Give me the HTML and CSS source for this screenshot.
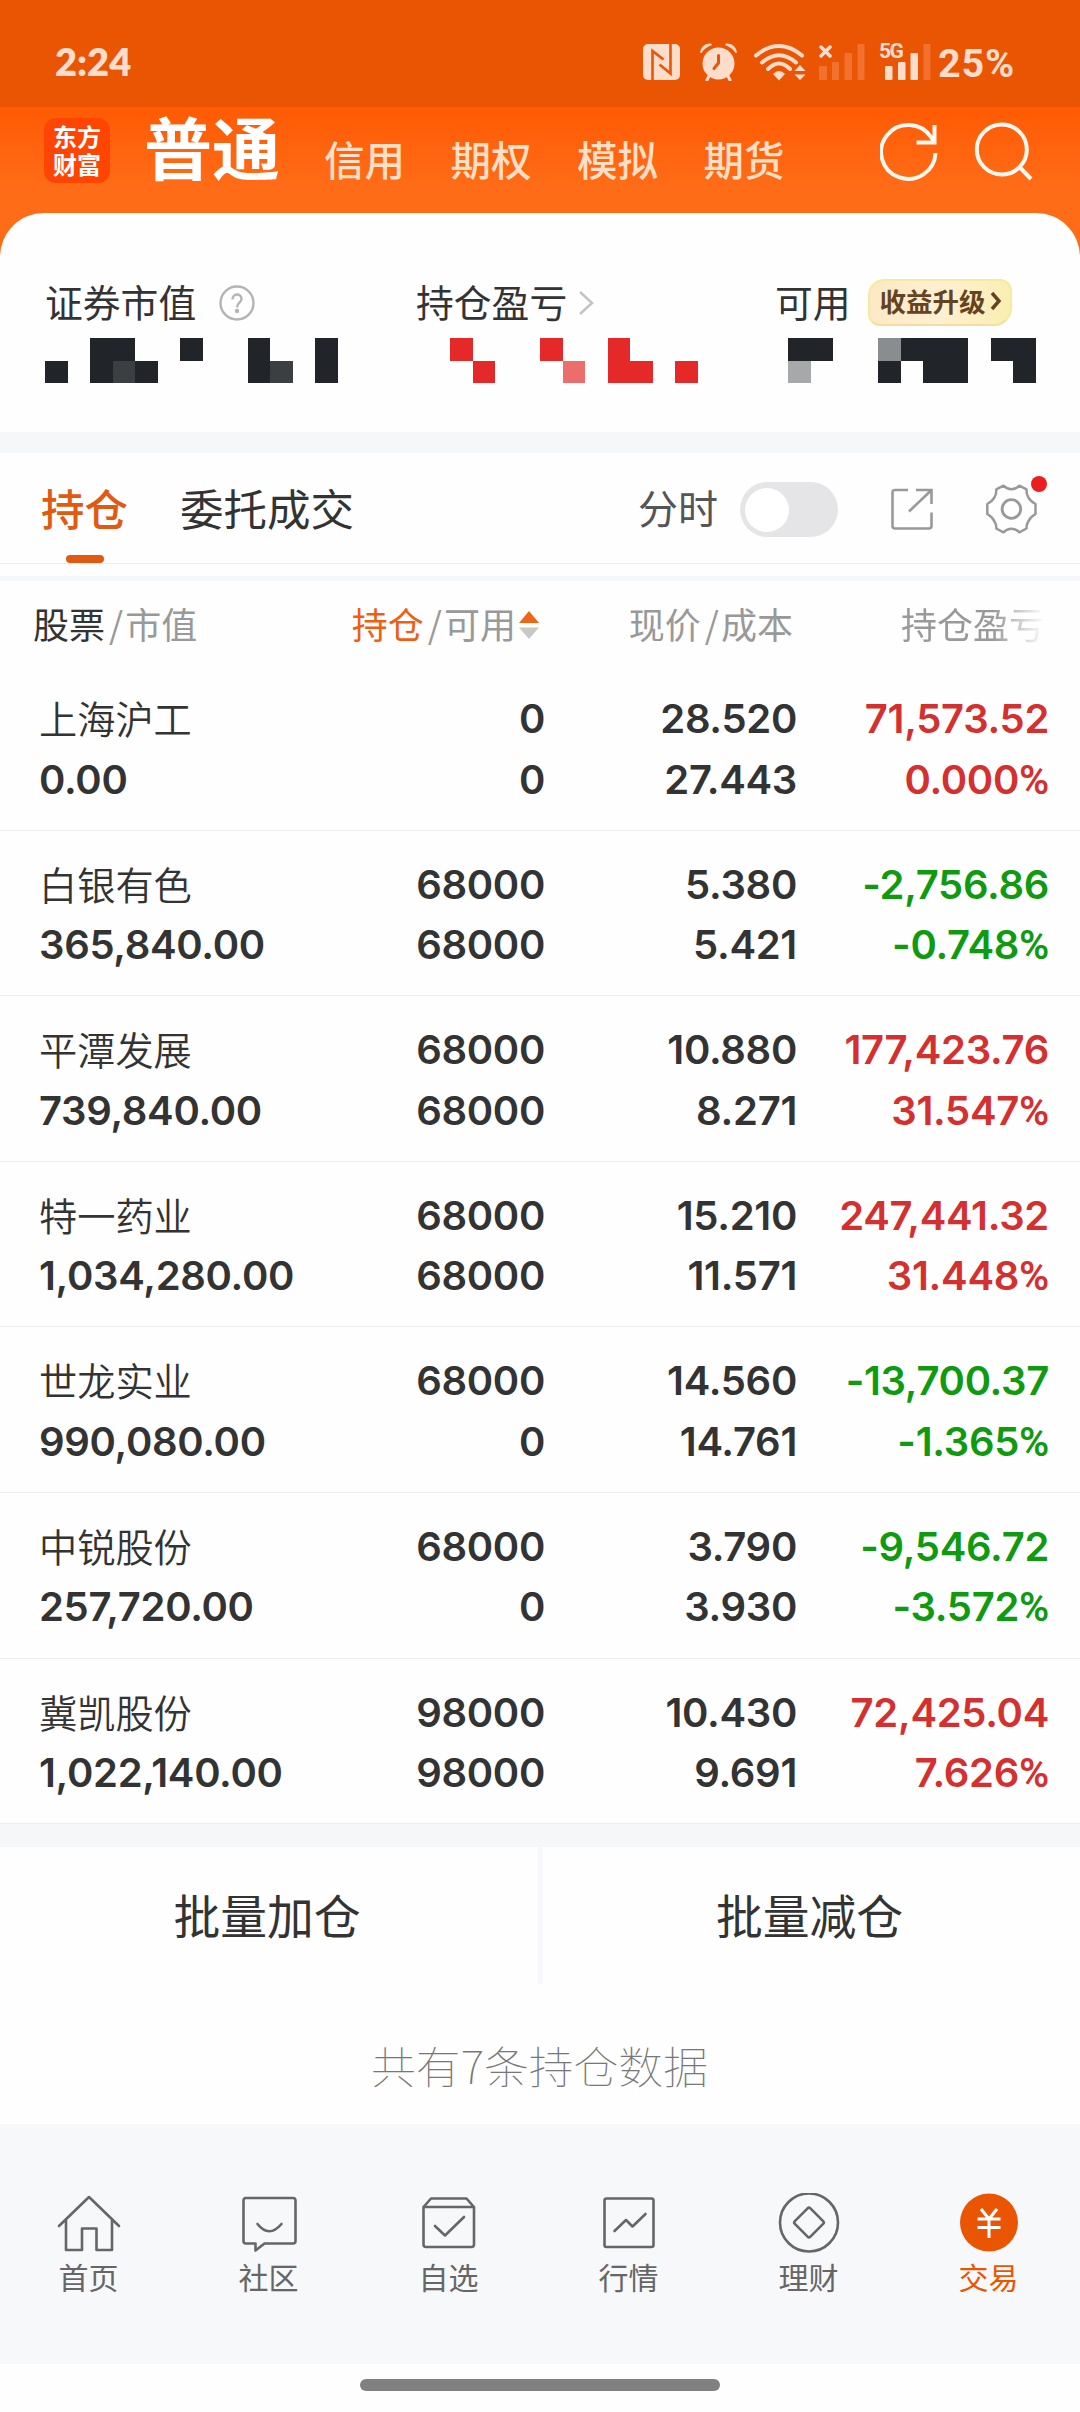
FILE: index.html
```html
<!DOCTYPE html>
<html lang="zh-CN">
<head>
  <meta charset="UTF-8" />
  <meta name="viewport" content="width=device-width, initial-scale=1" />
  <title>东方财富 - 持仓</title>
  <link rel="stylesheet" href="styles.css">
</head>
<body>

<div class="status-bar">
  <span class="clock">2:24</span>
  <div class="status-icons">
    <svg class="icon-nfc" width="37" height="36" viewBox="0 0 37 36">
      <rect width="37" height="36" rx="5" fill="#fcdccb"/>
      <path d="M9.500 36V7L20.500 15.500M27.500 0V29.500L16.500 20.500" fill="none" stroke="#ea5504" stroke-width="2.600"/>
    </svg>
    <svg class="icon-alarm" width="37" height="38" viewBox="0 0 37 38">
      <circle cx="18.500" cy="20.500" r="16" fill="#fcdccb"/>
      <path d="M0 9.500C1 3 6 0 11 .5L12 2C7 4 4 6 1.500 10ZM37 9.500C36 3 31 0 26 .5L25 2C30 4 33 6 35.500 10Z" fill="#fcdccb"/>
      <path d="M9 33L7 37M28 33L30 37" stroke="#fcdccb" stroke-width="3" stroke-linecap="round"/>
      <path d="M18.500 12.500V20L14 25.500" fill="none" stroke="#ea5504" stroke-width="3" stroke-linecap="round"/>
    </svg>
    <svg class="icon-wifi" width="52" height="37" viewBox="0 0 52 37">
      <path d="M2 11.500Q25 -7.500 48 11.500M8 18.500Q25 4 42 18.500M14 25Q25 14 36 25" fill="none" stroke="#fcdccb" stroke-width="4" stroke-linecap="round"/>
      <path d="M19 30Q25 24 31 30L25 36.500Z" fill="#fcdccb"/>
      <path d="M40.500 27L46 21L51.500 27ZM40.500 30.500L46 36L51.500 30.500Z" fill="#fcdccb"/>
    </svg>
    <svg class="icon-nosim" width="46" height="36" viewBox="0 0 46 36">
      <path d="M2 3L11 12M11 3L2 12" stroke="#fcdccb" stroke-width="3.500" stroke-linecap="round"/>
      <g fill="#f2712f">
        <rect x="0" y="22" width="8" height="14" rx="1"/>
        <rect x="13" y="18" width="7" height="18" rx="1"/>
        <rect x="25.500" y="9" width="7.500" height="27" rx="1"/>
        <rect x="38.500" y="0" width="7" height="36" rx="1"/>
      </g>
    </svg>
    <div class="signal">
      <span class="signal-type">5G</span>
      <svg width="46" height="36" viewBox="0 0 46 36">
        <rect x="0" y="22" width="7.500" height="14" rx="1" fill="#fcdccb"/>
        <rect x="13" y="18" width="7.500" height="18" rx="1" fill="#fcdccb"/>
        <rect x="25.500" y="9" width="7.500" height="27" rx="1" fill="#fcdccb"/>
        <rect x="38.500" y="0" width="7" height="36" rx="1" fill="#f2712f"/>
      </svg>
    </div>
    <span class="battery">25%</span>
  </div>
</div>

<header class="header">
  <div class="logo">东方财富</div>
  <nav class="account-tabs">
    <span class="account-tab active">普通</span>
    <span class="account-tab">信用</span>
    <span class="account-tab">期权</span>
    <span class="account-tab">模拟</span>
    <span class="account-tab">期货</span>
  </nav>
  <div class="header-actions">
    <svg width="60" height="60" viewBox="0 0 60 60" fill="none" stroke="#fff8f0" stroke-width="4">
      <path d="M55.500 31A27.200 27 0 1 1 51 15L54 19"/>
      <path d="M54.500 3V20.500H36.500"/>
    </svg>
    <svg width="60" height="60" viewBox="0 0 60 60" fill="none" stroke="#fff8f0" stroke-width="4">
      <circle cx="27.800" cy="27.500" r="25"/>
      <path d="M45 44.500L57 57"/>
    </svg>
  </div>
</header>

<main>
  <section class="summary">
    <div class="summary-item">
      <div class="summary-label">证券市值
        <svg class="help" width="36" height="36" viewBox="0 0 36 36" fill="none" stroke="#b4b4b4" stroke-width="2.400">
          <circle cx="18" cy="18" r="16.500"/>
          <path d="M13.500 14.500C13.500 8 22.500 8 22.500 14C22.500 18 18 17.500 18 22.500"/>
          <circle cx="18" cy="26" r="1" fill="#b4b4b4"/>
        </svg>
      </div>
      <svg class="masked" width="293" height="45" viewBox="0 0 13 2" preserveAspectRatio="none" shape-rendering="crispEdges" fill="#212429">
        <path d="M0 1h1v1h-1zM2 0h2v1h1v1h-3zM6 0h1v1h-1zM9 0h1v1h1v1h-2zM12 0h1v2h-1z"/>
        <path d="M3 1h1v1h-1zM10 1h1v1h-1z" fill="#3b3f41"/>
      </svg>
    </div>
    <div class="summary-item">
      <div class="summary-label">持仓盈亏
        <svg class="more" width="16" height="26" viewBox="0 0 16 26" fill="none" stroke="#c4c4c4" stroke-width="2.500">
          <path d="M2 2L14 13L2 24"/>
        </svg>
      </div>
      <svg class="masked masked-profit" width="248" height="45" viewBox="0 0 11 2" preserveAspectRatio="none" shape-rendering="crispEdges" fill="#e52828">
        <path d="M0 0h1v1h-1zM1 1h1v1h-1zM4 0h1v1h-1zM7 0h1v1h1v1h-2zM10 1h1v1h-1z"/>
        <path d="M5 1h1v1h-1z" fill="#ed6d6d"/>
      </svg>
    </div>
    <div class="summary-item">
      <div class="summary-label">可用
        <span class="badge">收益升级
          <svg width="12" height="20" viewBox="0 0 12 20" fill="none" stroke="#654322" stroke-width="3.500">
            <path d="M2 2L9 10L2 18"/>
          </svg>
        </span>
      </div>
      <svg class="masked masked-cash" width="248" height="45" viewBox="0 0 11 2" preserveAspectRatio="none" shape-rendering="crispEdges" fill="#212429">
        <path d="M0 0h2v1h-2zM4 1h1v1h-1zM5 0h3v2h-2v-1h-1zM9 0h2v2h-1v-1h-1z"/>
        <path d="M0 1h1v1h-1z" fill="#a7a8aa"/>
        <path d="M4 0h1v1h-1z" fill="#8a8d90"/>
      </svg>
    </div>
  </section>

  <section class="toolbar">
    <div class="view-tab active">持仓</div>
    <div class="view-tab">委托成交</div>
    <div class="toolbar-actions">
      <span class="toggle-label">分时</span>
      <span class="toggle"></span>
      <svg class="icon-share" width="42" height="42" viewBox="0 0 42 42" fill="none" stroke="#999" stroke-width="2.600">
        <path d="M17 2H4Q1.500 2 1.500 4V38Q1.500 40.500 4 40.500H38Q40.500 40.500 40.500 38V24.500"/>
        <path d="M25 2H40.500V16M40 2.500L18 23.500"/>
      </svg>
      <span class="settings">
        <svg width="53" height="52" viewBox="0 0 53 52" fill="none" stroke="#999" stroke-width="2.500" stroke-linejoin="round">
          <path d="M18.500 2.700L11.300 6.300Q11.500 11 9.500 14.300Q7.500 18 2.300 21V31Q7.500 34 9.500 38.500Q11.500 41.500 11.300 45.500L18.500 49.300Q22 45.700 26.400 45.700Q31 45.700 34.300 49.300L41.500 45.500Q41.300 41.500 43.300 38.500Q45.300 34 50.500 31V21Q45.300 18 43.300 14.300Q41.300 11 41.500 6.300L34.300 2.700Q31 6.300 26.400 6.300Q22 6.300 18.500 2.700Z"/>
          <circle cx="26.400" cy="26" r="9.300" stroke-width="2.800"/>
        </svg>
        <i class="dot"></i>
      </span>
    </div>
  </section>

  <section class="holdings">
    <div class="holdings-head">
      <div><span class="dark">股票</span><b>/</b>市值</div>
      <div><span class="orange">持仓</span><b>/</b>可用<svg class="sort" width="22" height="30" viewBox="0 0 22 30">
        <path d="M1 13L11 1L21 13Z" fill="#f06418"/><path d="M1 17.500L11 29L21 17.500Z" fill="#c8c8c8"/>
      </svg></div>
      <div>现价<b>/</b>成本</div>
      <div class="fade">持仓盈亏</div>
    </div>

    <div class="row">
      <div><span class="name">上海沪工</span><span>0.00</span></div>
      <div><span>0</span><span>0</span></div>
      <div><span>28.520</span><span>27.443</span></div>
      <div class="up"><span>71,573.52</span><span>0.000<i>%</i></span></div>
    </div>
    <div class="row">
      <div><span class="name">白银有色</span><span>365,840.00</span></div>
      <div><span>68000</span><span>68000</span></div>
      <div><span>5.380</span><span>5.421</span></div>
      <div class="down"><span>-2,756.86</span><span>-0.748<i>%</i></span></div>
    </div>
    <div class="row">
      <div><span class="name">平潭发展</span><span>739,840.00</span></div>
      <div><span>68000</span><span>68000</span></div>
      <div><span>10.880</span><span>8.271</span></div>
      <div class="up"><span>177,423.76</span><span>31.547<i>%</i></span></div>
    </div>
    <div class="row">
      <div><span class="name">特一药业</span><span>1,034,280.00</span></div>
      <div><span>68000</span><span>68000</span></div>
      <div><span>15.210</span><span>11.571</span></div>
      <div class="up"><span>247,441.32</span><span>31.448<i>%</i></span></div>
    </div>
    <div class="row">
      <div><span class="name">世龙实业</span><span>990,080.00</span></div>
      <div><span>68000</span><span>0</span></div>
      <div><span>14.560</span><span>14.761</span></div>
      <div class="down"><span>-13,700.37</span><span>-1.365<i>%</i></span></div>
    </div>
    <div class="row">
      <div><span class="name">中锐股份</span><span>257,720.00</span></div>
      <div><span>68000</span><span>0</span></div>
      <div><span>3.790</span><span>3.930</span></div>
      <div class="down"><span>-9,546.72</span><span>-3.572<i>%</i></span></div>
    </div>
    <div class="row">
      <div><span class="name">冀凯股份</span><span>1,022,140.00</span></div>
      <div><span>98000</span><span>98000</span></div>
      <div><span>10.430</span><span>9.691</span></div>
      <div class="up"><span>72,425.04</span><span>7.626<i>%</i></span></div>
    </div>
  </section>

  <section class="batch">
    <div class="batch-btn">批量加仓</div>
    <div class="batch-btn">批量减仓</div>
  </section>

  <p class="total">共有7条持仓数据</p>
</main>

<footer class="tab-bar">
  <div class="tab">
    <svg width="64" height="64" viewBox="0 0 64 64">
      <path d="M2 33L32 4L62 33M9 27V57H25V35.500H39.500V57H55V27"/>
    </svg>
    <span>首页</span>
  </div>
  <div class="tab">
    <svg width="64" height="64" viewBox="0 0 64 64">
      <path d="M8 5H56Q58.500 5 58.500 7.500V48Q58.500 50.500 56 50.500H27.500L18.500 57.500V50.500H9Q6.500 50.500 6.500 48V7.500Q6.500 5 9 5Z"/>
      <path d="M20.500 31Q32 45.500 44.500 31"/>
    </svg>
    <span>社区</span>
  </div>
  <div class="tab">
    <svg width="64" height="64" viewBox="0 0 64 64">
      <path d="M6.500 14L14 5.500H49.500L57 14V51.500Q57 54 54.500 54H9Q6.500 54 6.500 51.500ZM6.500 14H57"/>
      <path d="M18 33L28 42.500L47 24"/>
    </svg>
    <span>自选</span>
  </div>
  <div class="tab">
    <svg width="64" height="64" viewBox="0 0 64 64">
      <rect x="7.500" y="5.500" width="49" height="48.500" rx="2"/>
      <path d="M17.500 38L29 27L35.500 33.500L48.500 21"/>
    </svg>
    <span>行情</span>
  </div>
  <div class="tab">
    <svg width="64" height="64" viewBox="0 0 64 64">
      <circle cx="32" cy="29.500" r="29"/>
      <rect x="21" y="18.500" width="22" height="22" rx="2" transform="rotate(45 32 29.500)"/>
    </svg>
    <span>理财</span>
  </div>
  <div class="tab active">
    <svg width="64" height="64" viewBox="0 0 64 64">
      <circle class="coin" cx="32" cy="29.500" r="29"/>
      <path class="yuan" d="M24 16L32 26L40 16M20.500 26H43.500M20.500 34.500H43.500M32 26V45"/>
    </svg>
    <span>交易</span>
  </div>
</footer>

<div class="home-indicator"></div>

</body>
</html>
```
FILE: styles.css
```css
* {
  box-sizing: border-box;
}
body {
  font-family: 'Noto Sans CJK SC', sans-serif;
  background: #fefefe;
  margin: 0;
  color: #333;
  width: 1080px;
  height: 2412px;
  display: flex;
  flex-direction: column;
  overflow: hidden;
}
svg {
  display: block;
  flex-shrink: 0;
}

/* Status bar */
.status-bar {
  height: 107px;
  background: #ea5504;
  color: #fcdccb;
  display: flex;
  justify-content: space-between;
  padding: 43px 65px 0 55px;
}
.clock {
  font-family: Lato, sans-serif;
  font-size: 38px;
  font-weight: 800;
  line-height: 37px;
}
.status-icons {
  display: flex;
  align-items: flex-start;
}
.icon-nfc {
  margin: 1px 20px 0 0;
}
.icon-alarm {
  margin-right: 17px;
}
.icon-wifi {
  margin: 1px 13px 0 0;
}
.icon-nosim {
  margin: 1px 20px 0 0;
}
.signal {
  position: relative;
  margin: 1px 7px 0 0;
}
.signal-type {
  position: absolute;
  left: -6px;
  top: -3px;
  font-family: Roboto, sans-serif;
  font-size: 21px;
  font-weight: 700;
  line-height: 21px;
  letter-spacing: -1.500px;
  background: #ea5504;
}
.battery {
  font-family: Roboto, sans-serif;
  font-size: 39.500px;
  font-weight: 700;
  line-height: 42px;
  letter-spacing: 0.800px;
}

/* Header */
.header {
  height: 149px;
  flex-shrink: 0;
  background: linear-gradient(#ff5a04, #ff6c17 80px);
  display: flex;
  align-items: flex-start;
  padding: 11px 46px 0 44px;
}
.logo {
  width: 66px;
  height: 65px;
  border-radius: 12px;
  background: #ff4503;
  color: #fff;
  padding: 4px 9px 0;
  font-size: 24px;
  font-weight: 700;
  line-height: 28px;
}
.account-tabs {
  display: flex;
  margin-left: 34px;
}
.account-tab {
  font-size: 40.500px;
  font-weight: 500;
  line-height: 62px;
  color: #ffdfc6;
  margin: 10px 0 0 45.500px;
}
.account-tab.active {
  font-size: 68px;
  font-weight: 700;
  line-height: 64px;
  color: #fff;
  margin: -4px -1.500px 0 0;
}
.header-actions {
  display: flex;
  gap: 34px;
  margin: 4px 0 0 auto;
}

/* Account summary */
main {
  background: #fefefe;
  border-radius: 44px 44px 0 0;
  margin-top: -43px;
  flex-shrink: 0;
  height: 1911px;
}
.summary {
  height: 219px;
  display: grid;
  grid-template-columns: 371px 359px 1fr;
  padding: 62px 0 0 45px;
}
.summary-label {
  display: flex;
  align-items: center;
  height: 54px;
  font-size: 37.800px;
  line-height: 50px;
  padding-bottom: 3px;
}
.help {
  margin: 4px 0 0 23px;
}
.more {
  margin: 4px 0 0 11px;
}
.masked {
  margin-top: 9px;
}
.masked-profit {
  margin-left: 34px;
}
.masked-cash {
  margin-left: 13px;
}
.badge {
  display: flex;
  align-items: center;
  gap: 4px;
  width: 144px;
  height: 47px;
  margin: 3px 0 0 17px;
  padding: 0 0 2px 10px;
  border: 2px solid #f6ea9f;
  border-bottom-color: #f7dda2;
  border-radius: 16px 12px 18px 12px;
  background: linear-gradient(100deg, #fbe9c4, #fdf0d2 50%, #f9efb0);
  color: #654322;
  font-size: 26.500px;
  font-weight: 700;
  line-height: 40px;
  white-space: nowrap;
}

/* View tabs */
.toolbar {
  height: 149px;
  border-top: 21px solid #f6f7f9;
  border-bottom: 5px solid #f5f7fa;
  display: flex;
  align-items: flex-start;
  padding-left: 41px;
  background: linear-gradient(#eee, #eee) 0 110px / 100% 1px no-repeat;
}
.view-tab {
  height: 111px;
  font-size: 43.500px;
  line-height: 109px;
  margin-right: 52px;
}
.view-tab.active {
  color: #e05a12;
  font-weight: 500;
}
.view-tab.active::after {
  content: '';
  display: block;
  width: 38px;
  height: 8px;
  border-radius: 4px;
  background: #e05a12;
  margin: -7px auto 0;
}
.toolbar-actions {
  display: flex;
  align-items: center;
  height: 112px;
  margin: 0 42px 0 auto;
}
.toggle-label {
  font-size: 40px;
  line-height: 50px;
  padding-bottom: 4px;
  color: #555;
}
.toggle {
  width: 98px;
  height: 55px;
  border-radius: 28px;
  background: #e5e5e7;
  margin: 0 53px 0 22px;
  padding: 6px 5px;
}
.toggle::before {
  content: '';
  display: block;
  width: 44px;
  height: 44px;
  border-radius: 50%;
  background: #fff;
}
.settings {
  position: relative;
  margin-left: 52px;
}
.dot {
  position: absolute;
  right: -9px;
  top: -7px;
  width: 16px;
  height: 16px;
  border-radius: 50%;
  background: #ea2020;
}

/* Holdings table */
.holdings-head,
.row {
  display: grid;
  white-space: nowrap;
}
.holdings-head {
  grid-template-columns: 255px 252px 253px 252px;
  height: 84px;
  padding: 16px 0 0 33px;
  font-size: 36px;
  line-height: 53px;
  color: #999;
}
.holdings-head div {
  display: flex;
  justify-content: flex-end;
}
.holdings-head div:first-child {
  justify-content: flex-start;
}
.holdings-head b {
  font-weight: 400;
  margin: 0 2px 0 4px;
}
.dark {
  color: #333;
}
.orange {
  color: #ee5f14;
}
.sort {
  margin: 13px 0 0 2px;
}
.fade {
  -webkit-mask-image: linear-gradient(90deg, #000 200px, transparent);
  mask-image: linear-gradient(90deg, #000 200px, transparent);
}
.row {
  grid-template-columns: 254px 252px 252px 252px;
  height: 165.600px;
  padding: 24px 0 0 39px;
  border-bottom: 1px solid #eee;
  font-family: Inter, sans-serif;
  font-size: 40px;
  font-weight: 560;
  line-height: 60.500px;
  letter-spacing: -0.300px;
}
.row div {
  display: flex;
  flex-direction: column;
  align-items: flex-end;
}
.row div:first-child {
  align-items: flex-start;
}
.row i {
  font-family: Roboto, sans-serif;
  font-style: normal;
  font-size: 41px;
  line-height: 1;
}
.name {
  font-family: 'Noto Sans CJK SC', sans-serif;
  font-size: 38.200px;
  font-weight: 350;
  line-height: 57.500px;
  margin-bottom: 3px;
  letter-spacing: 0;
}
.up {
  color: #d43030;
}
.down {
  color: #109a10;
}

/* Batch actions */
.batch {
  height: 160px;
  border-top: 23px solid #f6f7f9;
  display: grid;
  grid-template-columns: 538px 1fr;
}
.batch-btn {
  text-align: center;
  font-size: 46.800px;
  line-height: 133px;
  padding-right: 4px;
}
.batch-btn + .batch-btn {
  border-left: 5px solid #f7f8f9;
  padding-right: 4px;
}
.total {
  margin: 0;
  text-align: center;
  font-size: 44.800px;
  font-weight: 100;
  line-height: 162px;
  padding-right: 1px;
  color: #777;
}

/* Bottom tab bar */
.tab-bar {
  height: 240px;
  flex-shrink: 0;
  background: #f7f8fa;
  display: grid;
  grid-template-columns: repeat(6, 180px);
  padding-top: 69px;
}
.tab {
  display: flex;
  flex-direction: column;
  align-items: center;
  padding-right: 3px;
  font-size: 30px;
  line-height: 38px;
  color: #666;
}
.tab svg {
  fill: none;
  stroke: #666;
  stroke-width: 2.600;
  stroke-linecap: round;
  stroke-linejoin: round;
}
.tab.active {
  color: #ea5504;
}
.tab .coin {
  fill: #ea5504;
  stroke: none;
}
.tab .yuan {
  stroke: #fff;
  stroke-width: 3;
  stroke-linecap: butt;
}
.home-indicator {
  width: 360px;
  height: 12px;
  flex-shrink: 0;
  border-radius: 6px;
  background: #808080;
  margin: 15px auto 0;
}
```
